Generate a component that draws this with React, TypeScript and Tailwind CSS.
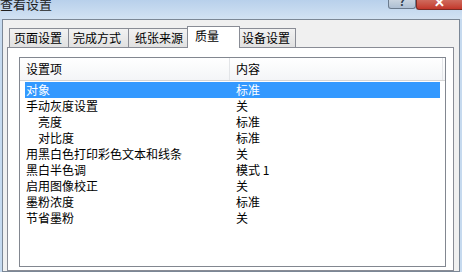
import React from "react";

const rows: { name: string; value: string; indent?: boolean; selected?: boolean }[] = [
  { name: "对象", value: "标准", selected: true },
  { name: "手动灰度设置", value: "关" },
  { name: "亮度", value: "标准", indent: true },
  { name: "对比度", value: "标准", indent: true },
  { name: "用黑白色打印彩色文本和线条", value: "关" },
  { name: "黑白半色调", value: "模式 1" },
  { name: "启用图像校正", value: "关" },
  { name: "墨粉浓度", value: "标准" },
  { name: "节省墨粉", value: "关" },
];

const font = { fontFamily: '"Noto Sans CJK SC", "Noto Sans", sans-serif' };

export default function App() {
  return (
    <div
      className="w-[462px] h-[272px] overflow-hidden bg-[#c6daef] flex flex-col text-black"
      style={font}
    >
      {/* title bar */}
      <div className="h-[19px] shrink-0 flex bg-gradient-to-b from-[#b8d0eb] to-[#d2e2f3]">
        <div className="text-[13px] leading-[13px] -mt-[3px] pl-[0px] text-[#1e1e1e]">查看设置</div>
        <div className="ml-auto flex items-start">
          <div className="w-[28px] h-[9px] rounded-b-[3px] border border-t-0 border-[#6b7b8e] bg-gradient-to-b from-[#c9d4e0] to-[#aebfd3] flex justify-center overflow-hidden">
            <span className="text-[11px] leading-[11px] -mt-[4px] text-[#2d3a4a] font-bold">?</span>
          </div>
          <div className="w-[46px] h-[10px] rounded-bl-[3px] border border-t-0 border-r-0 border-[#7a2b24] bg-gradient-to-b from-[#cf6a5d] to-[#c2362a] flex justify-center overflow-hidden">
            <span className="text-[13px] leading-[13px] -mt-[5px] text-white font-bold">✕</span>
          </div>
        </div>
      </div>

      {/* client area */}
      <div className="flex-1 mx-[2px] border border-[#7b8796] bg-[#f0f0f0] flex flex-col">
        {/* tab strip */}
        <div className="h-[27px] shrink-0 flex items-end pl-[6px] text-[12px]">
          <div className="w-[60px] h-[19px] border border-b-0 border-[#898c95] bg-gradient-to-b from-[#f2f2f2] to-[#e1e1e1] pl-[4px] leading-[18px]">页面设置</div>
          <div className="w-[61px] h-[19px] -ml-[1px] border border-b-0 border-[#898c95] bg-gradient-to-b from-[#f2f2f2] to-[#e1e1e1] pl-[4px] leading-[18px]">完成方式</div>
          <div className="w-[60px] h-[19px] -ml-[1px] border border-b-0 border-[#898c95] bg-gradient-to-b from-[#f2f2f2] to-[#e1e1e1] pl-[6px] leading-[18px]">纸张来源</div>
          <div className="w-[53px] h-[22px] -ml-[1px] -mb-[1px] relative z-10 border border-b-0 border-[#898c95] bg-white pl-[7px] leading-[18px]">质量</div>
          <div className="w-[58px] h-[19px] -ml-[2px] border border-b-0 border-[#898c95] bg-gradient-to-b from-[#f2f2f2] to-[#e1e1e1] pl-[3px] leading-[18px]">设备设置</div>
        </div>

        {/* panel */}
        <div className="flex-1 ml-[4px] mr-[5px] border border-[#898c95] bg-white">
          <div className="ml-[11px] mt-[9px] w-[427px] h-[210px] border border-[#828790] bg-white text-[12px]">
            {/* header */}
            <div className="h-[23px] flex border-b border-[#d5d5d5] bg-gradient-to-b from-white to-[#f4f5f7]">
              <div className="w-[210px] border-r border-[#e3e5e8] pl-[6px] leading-[22px]">设置项</div>
              <div className="w-[213px] border-r border-[#e3e5e8] pl-[6px] leading-[22px]">内容</div>
            </div>
            {/* rows */}
            <div className="pt-[1px]">
              {rows.map((r) => (
                <div
                  key={r.name}
                  className={
                    r.selected
                      ? "h-[16px] ml-[5px] w-[415px] flex bg-[#3399ff] text-white leading-[16px]"
                      : "h-[16px] ml-[5px] w-[415px] flex leading-[16px]"
                  }
                >
                  <div className={r.indent ? "w-[210px] pl-[13px]" : "w-[210px] pl-[1px]"}>{r.name}</div>
                  <div className="pl-[1px]">{r.value}</div>
                </div>
              ))}
            </div>
          </div>
        </div>
      </div>
    </div>
  );
}
